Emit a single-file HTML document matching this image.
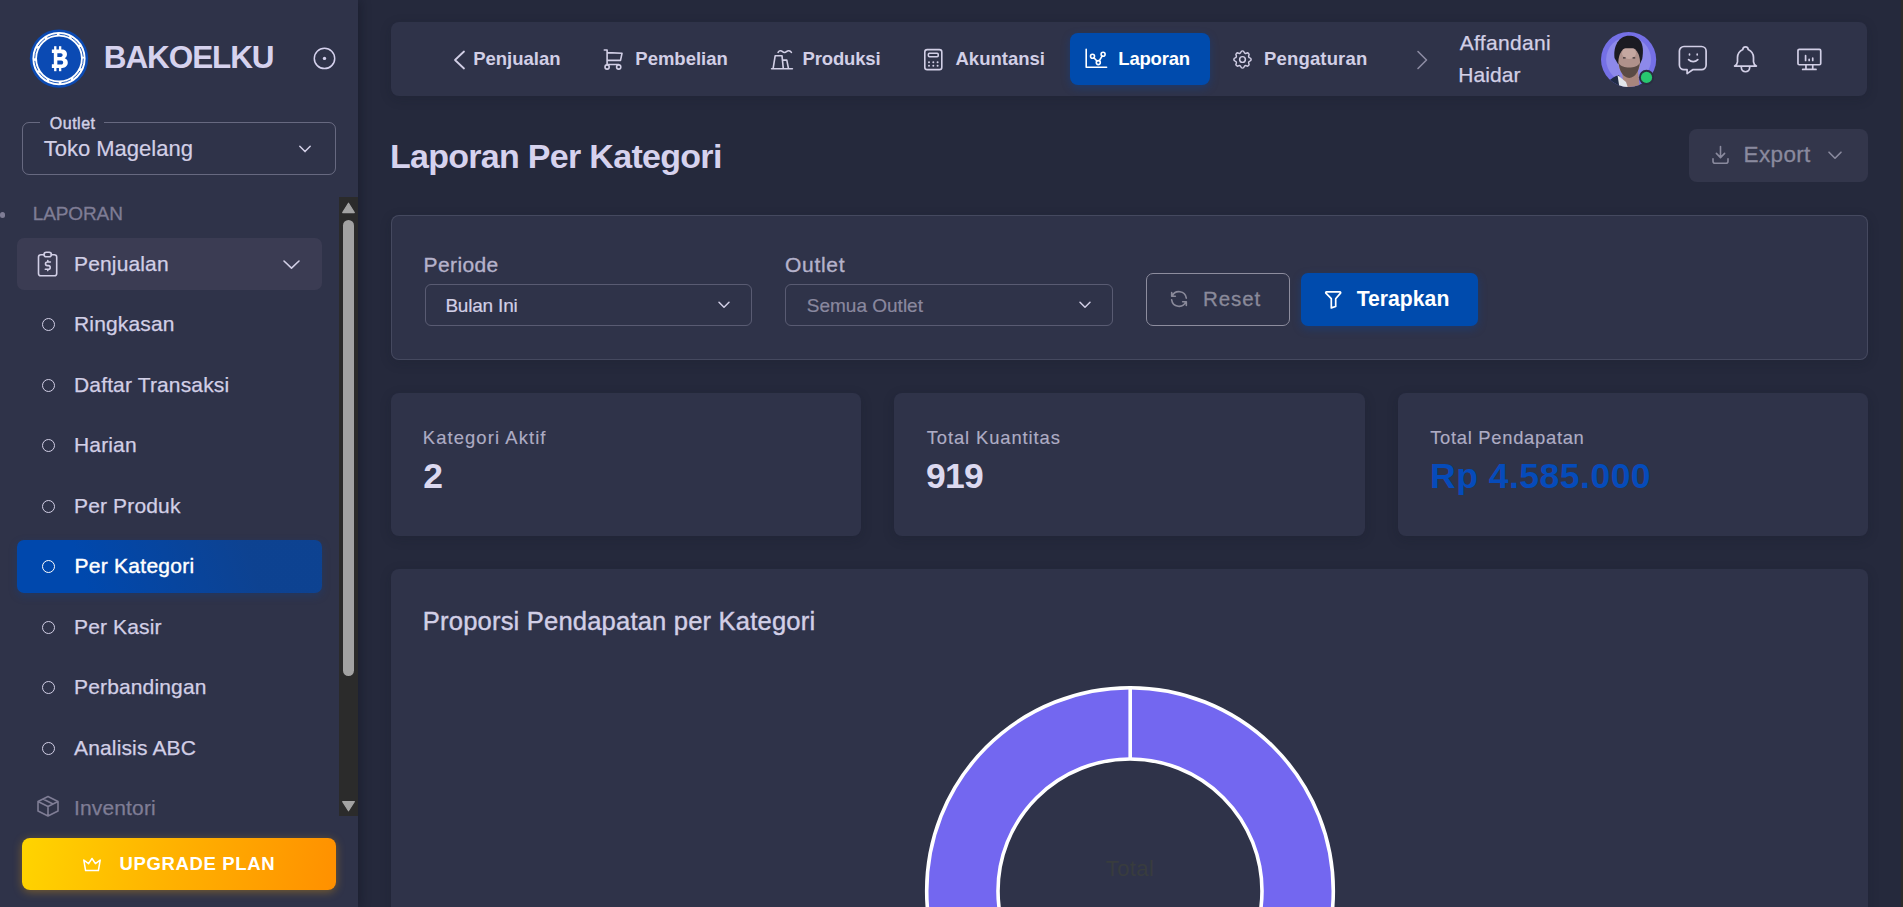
<!DOCTYPE html>
<html><head><meta charset="utf-8">
<style>
*{box-sizing:border-box;margin:0;padding:0}
html,body{width:1903px;height:907px;overflow:hidden;background:#25293C;font-family:"Liberation Sans",sans-serif;color:rgba(225,222,245,0.9)}
.abs{position:absolute}
.t{position:absolute;white-space:nowrap;line-height:1}
.m{-webkit-text-stroke:0.3px currentColor}
svg.i{position:absolute;overflow:visible;fill:none;stroke:currentColor;stroke-linecap:round;stroke-linejoin:round}
.card{position:absolute;background:#2F3349;border-radius:8px;box-shadow:0 3px 12px rgba(15,20,34,0.18)}
.nav{font-size:18.5px;font-weight:700;top:50.2px;color:#D2CFE6}
.si{font-size:21px;letter-spacing:0.15px;left:74px;color:#D2CFE6;-webkit-text-stroke:0.25px currentColor}
.bul{position:absolute;left:41.5px;width:13px;height:13px;border:1.6px solid #D2CFE6;border-radius:50%;margin-top:-0.5px}
.lbl{font-size:18.4px;letter-spacing:0.9px;top:428.6px;color:#AEACC4;-webkit-text-stroke:0.15px currentColor}
.val{font-size:35.5px;font-weight:700;top:458.5px;color:#DCD9F0}
</style></head><body>
<div class="abs" style="left:0;top:0;width:358px;height:907px;background:#2F3349;box-shadow:2px 0 10px rgba(10,12,22,0.35)"></div>
<!-- logo -->
<svg class="abs" style="left:29px;top:29px" width="60" height="60" viewBox="0 0 60 60">
  <circle cx="30" cy="29.6" r="29.2" fill="#0B4AB3"/>
  <circle cx="30" cy="29.6" r="24.3" fill="none" stroke="#fff" stroke-width="4.6"/>
  <circle cx="30" cy="29.6" r="24.3" fill="none" stroke="#0B4AB3" stroke-width="0.9" stroke-dasharray="10 2.7"/>
  <g fill="#fff" transform="translate(2.6,0) scale(0.9,1)">
    <rect x="25" y="17.2" width="2.6" height="4"/><rect x="30.4" y="17.2" width="2.6" height="4"/>
    <rect x="25" y="38.2" width="2.6" height="4"/><rect x="30.4" y="38.2" width="2.6" height="4"/>
    <path d="M22.5 20.5h11.2c3.4 0 5.6 2 5.6 4.8c0 1.9 -1 3.2 -2.5 3.9c2.1 .6 3.4 2.2 3.4 4.4c0 3.2 -2.5 5.3 -6 5.3h-11.7v-3.6h2.2v-11.2h-2.2z M28.6 24.2v3.8h3.9c1.2 0 2 -.8 2 -1.9c0 -1.1 -.8 -1.9 -2 -1.9z M28.6 31.4v4.1h4.3c1.3 0 2.2 -.8 2.2 -2.05c0 -1.25 -.9 -2.05 -2.2 -2.05z" fill-rule="evenodd"/>
  </g>
</svg>
<div class="t" style="left:103.8px;top:42.2px;font-size:31.5px;font-weight:700;letter-spacing:-1.1px;color:#D6D2EE">BAKOELKU</div>
<svg class="abs" style="left:312px;top:46px" width="25" height="25" viewBox="0 0 25 25"><circle cx="12.5" cy="12.4" r="10.2" fill="none" stroke="#D6D2EE" stroke-width="1.5"/><circle cx="12.5" cy="12.4" r="1.7" fill="#D6D2EE"/></svg>
<!-- outlet select -->
<div class="abs" style="left:22px;top:122px;width:314px;height:53px;border:1px solid rgba(225,222,245,0.32);border-radius:7px"></div>
<div class="abs" style="left:40px;top:118px;width:64px;height:8px;background:#2F3349"></div>
<div class="t" style="left:49.8px;top:115.8px;font-size:16px;letter-spacing:0.5px;color:#D2CFE6;-webkit-text-stroke:0.45px currentColor">Outlet</div>
<div class="t" style="left:43.7px;top:137.8px;font-size:22px;color:#D2CFE6;-webkit-text-stroke:0.2px currentColor">Toko Magelang</div>
<svg class="i" style="left:299px;top:145px;color:#D2CFE6" width="12" height="8" viewBox="0 0 12 8" stroke-width="1.5"><path d="M0.8 1.2l5.2 5.4l5.2 -5.4"/></svg>
<!-- menu -->
<div class="abs" style="left:0px;top:212.4px;width:5.4px;height:5.4px;border-radius:50%;background:#7F7D95"></div>
<div class="t" style="left:32.7px;top:204.2px;font-size:19px;letter-spacing:-0.1px;color:#7F7D95;-webkit-text-stroke:0.3px currentColor">LAPORAN</div>
<div class="abs" style="left:17px;top:238px;width:305px;height:52px;border-radius:7px;background:#3B3C53"></div>
<svg class="i" style="left:37px;top:251px;color:#D2CFE6" width="22" height="26" viewBox="0 0 22 26" stroke-width="1.6">
  <path d="M7 3.8h-3.2a2.3 2.3 0 0 0 -2.3 2.3v16.4a2.3 2.3 0 0 0 2.3 2.3h13.6a2.3 2.3 0 0 0 2.3 -2.3v-16.4a2.3 2.3 0 0 0 -2.3 -2.3h-3.2"/>
  <rect x="7" y="1.2" width="7.4" height="4.6" rx="2.3"/>
  <path d="M13.4 11h-3.1a1.8 1.8 0 0 0 0 3.6h1.1a1.8 1.8 0 0 1 0 3.6h-3.1M10.8 18.2v1.4M10.8 9.6v1.4"/>
</svg>
<div class="t si" style="top:253.1px">Penjualan</div>
<svg class="i" style="left:283px;top:259.5px;color:#D2CFE6" width="17" height="9" viewBox="0 0 17 9" stroke-width="1.6"><path d="M1 1l7.5 7.2l7.5 -7.2"/></svg>
<div class="bul" style="top:318.5px"></div><div class="t si" style="top:313.1px">Ringkasan</div>
<div class="bul" style="top:379px"></div><div class="t si" style="top:373.6px">Daftar Transaksi</div>
<div class="bul" style="top:439.5px"></div><div class="t si" style="top:434.1px">Harian</div>
<div class="bul" style="top:500px"></div><div class="t si" style="top:494.6px">Per Produk</div>
<div class="abs" style="left:17px;top:540px;width:305px;height:53px;border-radius:7px;background:linear-gradient(72deg,#0048AD 22%,rgba(0,72,173,0.72) 76%);box-shadow:0 3px 8px rgba(0,72,173,0.25)"></div>
<div class="bul" style="top:560.5px;border-color:#fff"></div><div class="t si" style="top:555.1px;color:#fff;letter-spacing:0.25px;left:74.6px;-webkit-text-stroke:0.4px #fff">Per Kategori</div>
<div class="bul" style="top:621px"></div><div class="t si" style="top:615.6px">Per Kasir</div>
<div class="bul" style="top:681.5px"></div><div class="t si" style="top:676.1px">Perbandingan</div>
<div class="bul" style="top:742px"></div><div class="t si" style="top:736.6px">Analisis ABC</div>
<svg class="i" style="left:36px;top:795px;color:#7F7D95" width="24" height="22" viewBox="0 0 24 22" stroke-width="1.6"><path d="M12 1.5l10 5v9.5l-10 5l-10 -5v-9.5z M12 11.5l10 -5 M12 11.5v9.5 M12 11.5l-10 -5 M7 4l10 5"/></svg>
<div class="t si" style="top:797.1px;color:#7F7D95">Inventori</div>
<!-- scrollbar -->
<div class="abs" style="left:339px;top:197px;width:19px;height:619px;background:#2B2B2B"></div>
<svg class="abs" style="left:341px;top:202px" width="15" height="12" viewBox="0 0 15 12"><path d="M7.5 1.2l5.8 9.4h-11.6z" fill="#A3A3A3" stroke="#A3A3A3" stroke-width="1.2" stroke-linejoin="round"/></svg>
<div class="abs" style="left:343px;top:220px;width:11.2px;height:456px;border-radius:6px;background:#A3A3A3"></div>
<svg class="abs" style="left:341px;top:800px" width="15" height="12" viewBox="0 0 15 12"><path d="M7.5 10.8l5.8 -9.2h-11.6z" fill="#A3A3A3" stroke="#A3A3A3" stroke-width="1.2" stroke-linejoin="round"/></svg>
<!-- upgrade -->
<div class="abs" style="left:22px;top:838px;width:314px;height:52px;border-radius:8px;background:linear-gradient(100deg,#FFD400 0%,#FFB000 50%,#FF9000 100%);box-shadow:0 2px 10px rgba(255,170,0,0.35)"></div>
<svg class="i" style="left:82px;top:857px;color:#fff" width="20" height="15" viewBox="0 0 20 15" stroke-width="1.5"><path d="M10 1.5l3.4 5.2l4.8 -3.6l-1.8 10.4h-12.8l-1.8 -10.4l4.8 3.6z"/></svg>
<div class="t" style="left:119.5px;top:854.5px;font-size:18.5px;font-weight:700;letter-spacing:0.65px;color:#fff">UPGRADE PLAN</div>

<!-- navbar -->
<div class="card" style="left:391px;top:22px;width:1476px;height:74px"></div>
<svg class="i" style="left:453px;top:50px;color:#D2CFE6" width="13" height="20" viewBox="0 0 13 20" stroke-width="1.8"><path d="M11 1.5l-9 8.5l9 8.5"/></svg>
<div class="t nav" style="left:473.2px">Penjualan</div>
<svg class="i" style="left:603px;top:48px;color:#D2CFE6" width="21" height="23" viewBox="0 0 21 23" stroke-width="1.6"><path d="M1.3 2h2.8v14.5h11.6 M4.1 4.6l14.9 .7l-1.5 7.1h-13.4"/><circle cx="4.1" cy="19" r="2.1"/><circle cx="15.7" cy="19" r="2.1"/></svg>
<div class="t nav" style="left:635.3px">Pembelian</div>
<svg class="i" style="left:770px;top:48px;color:#D2CFE6" width="24" height="24" viewBox="0 0 24 24" stroke-width="1.6"><path d="M1.6 20.8h20.8 M3.1 20.6l2.1 -12.9h6.8l1.3 12.9 M12.9 12.1h3.9l1.7 8.5 M8.1 4.4C9 2.5 11 2.2 12.5 3.6C13.5 4.8 15.5 4.8 16.5 3.6C18 2.2 20 2.5 21.4 4.4"/></svg>
<div class="t nav" style="left:802.5px;letter-spacing:-0.15px">Produksi</div>
<svg class="i" style="left:923px;top:48px;color:#D2CFE6" width="21" height="23" viewBox="0 0 21 23" stroke-width="1.6"><rect x="1.8" y="1.6" width="17" height="20" rx="2.4"/><rect x="5.4" y="5.2" width="9.8" height="3.6" rx="1"/><path d="M6 14.2v.01M10.3 14.2v.01M14.6 14.2v.01M6 17.8v.01M10.3 17.8v.01M14.6 17.8v.01" stroke-width="2"/></svg>
<div class="t nav" style="left:955.5px">Akuntansi</div>
<div class="abs" style="left:1070px;top:33px;width:140px;height:52px;border-radius:8px;background:#004BAD;box-shadow:0 3px 8px rgba(0,72,173,0.35)"></div>
<svg class="i" style="left:1085px;top:48px;color:#fff" width="23" height="23" viewBox="0 0 23 23" stroke-width="1.6"><path d="M1.2 1.4v17.8h20.4"/><circle cx="7.5" cy="8.3" r="2"/><circle cx="18.1" cy="6.2" r="2"/><circle cx="13.3" cy="14.6" r="2"/><path d="M8.9 9.8l3 3.2 M14.3 12.9l2.8 -4.9"/></svg>
<div class="t nav" style="left:1118.3px;color:#fff;letter-spacing:-0.2px">Laporan</div>
<svg class="i" style="left:1231px;top:48px;color:#D2CFE6" width="23" height="23" viewBox="0 0 24 24" stroke-width="1.55"><path d="M10.325 4.317c.426 -1.756 2.924 -1.756 3.35 0a1.724 1.724 0 0 0 2.573 1.066c1.543 -.94 3.31 .826 2.37 2.37a1.724 1.724 0 0 0 1.065 2.572c1.756 .426 1.756 2.924 0 3.35a1.724 1.724 0 0 0 -1.066 2.573c.94 1.543 -.826 3.31 -2.37 2.37a1.724 1.724 0 0 0 -2.572 1.065c-.426 1.756 -2.924 1.756 -3.35 0a1.724 1.724 0 0 0 -2.573 -1.066c-1.543 .94 -3.31 -.826 -2.37 -2.37a1.724 1.724 0 0 0 -1.065 -2.572c-1.756 -.426 -1.756 -2.924 0 -3.35a1.724 1.724 0 0 0 1.066 -2.573c-.94 -1.543 .826 -3.31 2.37 -2.37c1 .608 2.296 .07 2.572 -1.065z"/><circle cx="12" cy="12" r="3"/></svg>
<div class="t nav" style="left:1264.1px;letter-spacing:0.15px">Pengaturan</div>
<svg class="i" style="left:1416px;top:50px;color:#8D8BA3" width="13" height="20" viewBox="0 0 13 20" stroke-width="1.6"><path d="M2 1.5l8.5 8.5l-8.5 8.5"/></svg>
<div class="t" style="left:1459.8px;top:32.35px;font-size:21px;letter-spacing:0.3px;color:#D2CFE6;-webkit-text-stroke:0.25px currentColor">Affandani</div>
<div class="t" style="left:1458.2px;top:63.85px;font-size:21px;letter-spacing:0.1px;color:#D2CFE6;-webkit-text-stroke:0.25px currentColor">Haidar</div>
<!-- avatar -->
<svg class="abs" style="left:1600px;top:31px" width="60" height="60" viewBox="0 0 60 60">
  <defs><clipPath id="av"><circle cx="28.6" cy="28.5" r="27.6"/></clipPath></defs>
  <g clip-path="url(#av)">
    <rect x="0" y="0" width="60" height="60" fill="#7570E6"/>
    <circle cx="28.6" cy="28.5" r="22.5" fill="#8D89EA"/>
    <path d="M22 40L38 40L40 60L24 60Z" fill="#A8857D"/>
    <path d="M6 60L9 51C11 47 15 45 19 44L23 60Z" fill="#1F2A44"/>
    <path d="M17.5 44L26 51L29 60L20 60Z" fill="#E3E6EA"/>
    <path d="M14.5 27C13 15 19 4.8 29 4.8C39.5 4.8 45 12 42.2 28L40 33L18 33Z" fill="#1B1B22"/>
    <ellipse cx="29.2" cy="31" rx="10.8" ry="15.2" fill="#B0918B"/>
    <ellipse cx="29" cy="22" rx="7" ry="6" fill="#C5A7A1"/>
    <path d="M18.6 32C19.5 40 23 46.5 29.2 47C35.5 46.5 39 40 39.8 32C37.5 35.5 34 36.5 29.2 36.5C24.5 36.5 21 35.5 18.6 32Z" fill="#5A4A45"/>
    <path d="M17.5 19C18 10 23 6 29 6C35.5 6 40.5 10 41 19C37 16.5 22 16.5 17.5 19Z" fill="#1B1B22"/>
    <path d="M23 26.8h2.6M32.6 26.8h2.6" stroke="#3A3236" stroke-width="1.2"/>
  </g>
  <circle cx="46.5" cy="46.4" r="7.6" fill="#2A2D40"/>
  <circle cx="46.5" cy="46.4" r="5.6" fill="#28C76F"/>
</svg>
<svg class="i" style="left:1678px;top:45px;color:#D2CFE6" width="31" height="30" viewBox="0 0 31 30" stroke-width="1.7"><path d="M6 1.5h17.5a4.6 4.6 0 0 1 4.6 4.6v14a4.6 4.6 0 0 1 -4.6 4.6h-8.8l-5.6 3.9v-3.9h-3.1a4.6 4.6 0 0 1 -4.6 -4.6v-14a4.6 4.6 0 0 1 4.6 -4.6z"/><path d="M11.5 9.2v.6M19.2 9.2v.6 M10.6 14.6c2.6 2.6 6.6 2.6 9.2 0"/></svg>
<svg class="i" style="left:1731px;top:44.5px;color:#D2CFE6" width="29" height="32" viewBox="0 0 27 30" stroke-width="1.6"><path d="M11 4.2a2.5 2.5 0 1 1 5 0a8.6 8.6 0 0 1 5 7.4v4.3a5 5 0 0 0 2.7 3.9h-20.4a5 5 0 0 0 2.7 -3.9v-4.3a8.6 8.6 0 0 1 5 -7.4 M9.6 19.8v1.4a3.9 3.9 0 0 0 7.8 0v-1.4"/></svg>
<svg class="i" style="left:1797px;top:48px;color:#D2CFE6" width="24.5" height="23.5" viewBox="0 0 26 25" stroke-width="1.8"><rect x="1" y="1.4" width="24.2" height="16.4" rx="1.4"/><path d="M6 22.8h14.2 M9.5 17.8v5 M16.7 17.8v5 M9.1 13.2v-5 M12.9 13.2v-1.2 M16.7 13.2v-2.4"/></svg>

<!-- title -->
<div class="t" style="left:389.9px;top:138.6px;font-size:34px;font-weight:700;letter-spacing:-0.7px;color:#D6D2EE">Laporan Per Kategori</div>
<div class="abs" style="left:1689px;top:129px;width:179px;height:53px;border-radius:8px;background:#33364B"></div>
<svg class="i" style="left:1711px;top:145px;color:#8A8A9E" width="19" height="20" viewBox="0 0 19 20" stroke-width="1.6"><path d="M2 13.8v2.4a2 2 0 0 0 2 2h11a2 2 0 0 0 2 -2v-2.4 M5.4 8.4l4.1 4.2l4.1 -4.2 M9.5 1.6v11"/></svg>
<div class="t m" style="left:1743.6px;top:143.7px;font-size:22.5px;letter-spacing:0.35px;color:#8A8A9E">Export</div>
<svg class="i" style="left:1828px;top:150.5px;color:#8A8A9E" width="14" height="9" viewBox="0 0 14 9" stroke-width="1.6"><path d="M1 1.2l6 6l6 -6"/></svg>

<!-- filter card -->
<div class="card" style="left:391px;top:215px;width:1477px;height:145px;border:1px solid rgba(225,222,245,0.13)"></div>
<div class="t" style="left:423.5px;top:253.55px;font-size:21px;letter-spacing:0.4px;color:#B5B2CB;-webkit-text-stroke:0.35px currentColor">Periode</div>
<div class="abs" style="left:425px;top:284px;width:327px;height:42px;border:1px solid rgba(225,222,245,0.24);border-radius:6px"></div>
<div class="t" style="left:445.4px;top:295.55px;font-size:19px;letter-spacing:-0.2px;color:#D2CFE6;-webkit-text-stroke:0.2px currentColor">Bulan Ini</div>
<svg class="i" style="left:718px;top:301px;color:#D2CFE6" width="12" height="8" viewBox="0 0 12 8" stroke-width="1.5"><path d="M1 1.2l5 5l5 -5"/></svg>
<div class="t" style="left:785px;top:253.55px;font-size:21px;letter-spacing:0.7px;color:#B5B2CB;-webkit-text-stroke:0.35px currentColor">Outlet</div>
<div class="abs" style="left:785px;top:284px;width:328px;height:42px;border:1px solid rgba(225,222,245,0.24);border-radius:6px"></div>
<div class="t" style="left:806.8px;top:295.55px;font-size:19px;color:#8A889F;-webkit-text-stroke:0.2px currentColor">Semua Outlet</div>
<svg class="i" style="left:1079px;top:301px;color:#D2CFE6" width="12" height="8" viewBox="0 0 12 8" stroke-width="1.5"><path d="M1 1.2l5 5l5 -5"/></svg>
<div class="abs" style="left:1146px;top:273px;width:144px;height:53px;border:1px solid #8D8D9E;border-radius:7px"></div>
<svg class="i" style="left:1168px;top:287.8px;color:#8A8A9A" width="22" height="22" viewBox="0 0 24 24" stroke-width="1.75"><path d="M20 11a8.1 8.1 0 0 0 -15.5 -2m-.5 -4v4h4 M4 13a8.1 8.1 0 0 0 15.5 2m.5 4v-4h-4"/></svg>
<div class="t m" style="left:1202.9px;top:288.8px;font-size:20.5px;letter-spacing:0.95px;color:#8A8A9A">Reset</div>
<div class="abs" style="left:1301px;top:273px;width:177px;height:53px;border-radius:7px;background:#004BAD;box-shadow:0 3px 8px rgba(0,72,173,0.35)"></div>
<svg class="i" style="left:1324px;top:290px;color:#fff" width="19" height="19" viewBox="0 0 19 19" stroke-width="1.7"><path d="M2.5 1.8h13.4a.8 .8 0 0 1 .6 1.3l-4.8 5.6v7.8l-4.4 1.4v-9.2l-5.4 -5.6a.8 .8 0 0 1 .6 -1.3z"/></svg>
<div class="t" style="left:1356.7px;top:288.2px;font-size:21.2px;font-weight:700;color:#fff">Terapkan</div>

<!-- stats -->
<div class="card" style="left:391px;top:393px;width:470px;height:143px"></div>
<div class="card" style="left:894px;top:393px;width:471px;height:143px"></div>
<div class="card" style="left:1398px;top:393px;width:470px;height:143px"></div>
<div class="t lbl" style="left:422.8px;letter-spacing:1.1px">Kategori Aktif</div>
<div class="t lbl" style="left:926.7px">Total Kuantitas</div>
<div class="t lbl" style="left:1430.2px;letter-spacing:0.7px">Total Pendapatan</div>
<div class="t val" style="left:423.2px">2</div>
<div class="t val" style="left:926px;letter-spacing:-0.8px">919</div>
<div class="t val" style="left:1430px;letter-spacing:0.5px;color:#064BBA">Rp 4.585.000</div>

<!-- chart card -->
<div class="card" style="left:391px;top:569px;width:1477px;height:400px"></div>
<div class="t" style="left:422.8px;top:609.35px;font-size:25.6px;letter-spacing:0.17px;color:#D2CFE6;-webkit-text-stroke:0.4px currentColor">Proporsi Pendapatan per Kategori</div>
<svg class="abs" style="left:900px;top:660px" width="460" height="247" viewBox="900 660 460 247">
  <path d="M1130 687.7 A203.3 203.3 0 1 1 1129.99 687.7 Z M1130 759 A132 132 0 1 0 1130.01 759 Z" fill="#7367F0" fill-rule="evenodd"/>
  <circle cx="1130" cy="891" r="203.3" fill="none" stroke="#fff" stroke-width="3.6"/>
  <circle cx="1130" cy="891" r="132" fill="none" stroke="#fff" stroke-width="3.6"/>
  <line x1="1130.2" y1="686" x2="1130.2" y2="760" stroke="#fff" stroke-width="3.6"/>
</svg>
<div class="t" style="left:1030px;width:200px;text-align:center;top:857.6px;font-size:22px;letter-spacing:0.4px;color:#383C3E">Total</div>
<div class="t" style="left:1030px;width:200px;text-align:center;top:903.2px;font-size:27.5px;font-weight:700;color:#383C3E">Rp 4.585.000</div>
<div class="abs" style="left:1901px;top:0;width:2px;height:907px;background:#2C2C2A"></div>
</body></html>
